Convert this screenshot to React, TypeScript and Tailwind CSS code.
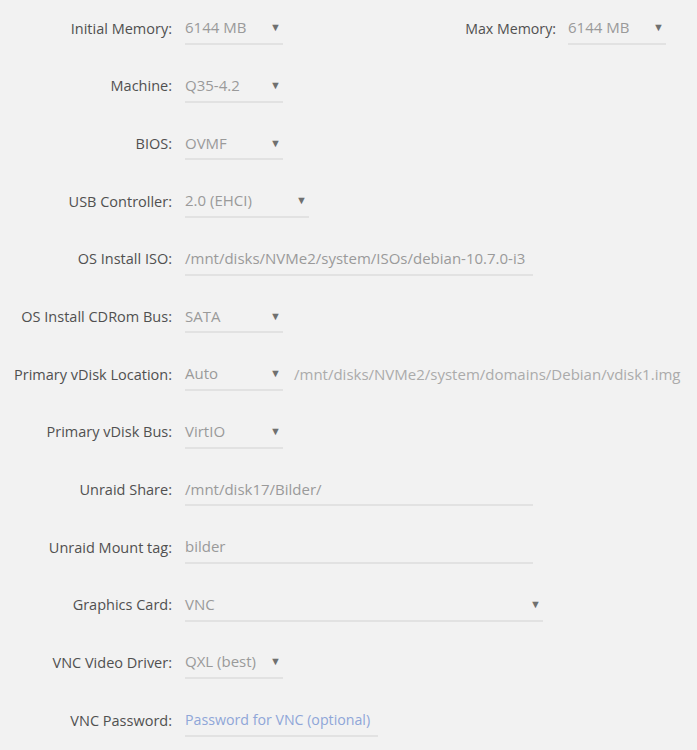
type SelectProps = {
  value: string;
  width: string;
};

function Select({ value, width }: SelectProps) {
  return (
    <div
      className={`${width} relative flex h-[33px] items-center border-b-2 border-[#e2e2e2] pr-[2px] text-[15px] text-[#9a9a9a]`}
    >
      <span className="flex-1">{value}</span>
      <span className="text-[11px] text-[#707070]">▼</span>
    </div>
  );
}

function TextField({
  value,
  width,
  placeholder,
}: {
  value?: string;
  width: string;
  placeholder?: string;
}) {
  return (
    <div
      className={`${width} flex h-[33px] items-center whitespace-nowrap border-b-2 border-[#e2e2e2] text-[15px]`}
    >
      {value ? (
        <span className="text-[#9a9a9a]">{value}</span>
      ) : (
        <span className="text-[14.2px] text-[#8fa6d8]">{placeholder}</span>
      )}
    </div>
  );
}

function Row({ label, children }: { label: string; children: React.ReactNode }) {
  return (
    <div className="flex h-[57.67px] items-start pt-[12px]">
      <div className="flex h-[33px] w-[172px] shrink-0 items-center justify-end text-[14.5px] text-[#505050]">
        {label}
      </div>
      <div className="ml-[13px] flex items-start">{children}</div>
    </div>
  );
}

export default function App() {
  return (
    <div
      className="min-h-[750px] w-[697px] bg-[#f2f2f2] text-[14px]"
      style={{ fontFamily: '"Open Sans", "Noto Sans", sans-serif' }}
    >
      <Row label="Initial Memory:">
        <Select value="6144 MB" width="w-[98px]" />
        <div className="flex h-[33px] w-[273px] items-center justify-end text-[14.2px] text-[#505050]">
          Max Memory:
        </div>
        <div className="ml-[12px]">
          <Select value="6144 MB" width="w-[98px]" />
        </div>
      </Row>
      <Row label="Machine:">
        <Select value="Q35-4.2" width="w-[98px]" />
      </Row>
      <Row label="BIOS:">
        <Select value="OVMF" width="w-[98px]" />
      </Row>
      <Row label="USB Controller:">
        <Select value="2.0 (EHCI)" width="w-[124px]" />
      </Row>
      <Row label="OS Install ISO:">
        <TextField
          value="/mnt/disks/NVMe2/system/ISOs/debian-10.7.0-i3"
          width="w-[348px]"
        />
      </Row>
      <Row label="OS Install CDRom Bus:">
        <Select value="SATA" width="w-[98px]" />
      </Row>
      <Row label="Primary vDisk Location:">
        <Select value="Auto" width="w-[98px]" />
        <div className="ml-[11px] flex h-[33px] items-center whitespace-nowrap text-[15px] text-[#ababab]">
          /mnt/disks/NVMe2/system/domains/Debian/vdisk1.img
        </div>
      </Row>
      <Row label="Primary vDisk Bus:">
        <Select value="VirtIO" width="w-[98px]" />
      </Row>
      <Row label="Unraid Share:">
        <TextField value="/mnt/disk17/Bilder/" width="w-[348px]" />
      </Row>
      <Row label="Unraid Mount tag:">
        <TextField value="bilder" width="w-[348px]" />
      </Row>
      <Row label="Graphics Card:">
        <Select value="VNC" width="w-[358px]" />
      </Row>
      <Row label="VNC Video Driver:">
        <Select value="QXL (best)" width="w-[98px]" />
      </Row>
      <Row label="VNC Password:">
        <TextField placeholder="Password for VNC (optional)" width="w-[193px]" />
      </Row>
    </div>
  );
}
